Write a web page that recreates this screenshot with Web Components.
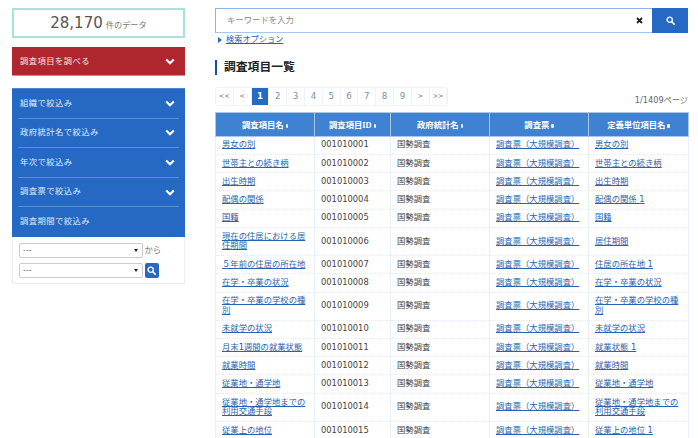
<!DOCTYPE html>
<html lang="ja">
<head>
<meta charset="utf-8">
<title>調査項目一覧</title>
<style>
html,body{margin:0;padding:0;height:438px;overflow:hidden;background:#fff;}
body{font:8.33px/1.13 "DejaVu Sans","Noto Sans CJK JP",sans-serif;color:#444;}
app-page{width:698px;}
</style>
</head>
<body>
<app-page>
    <data-count slot="side" value="28,170" unit="件のデータ"></data-count>
    <red-toggle slot="side">調査項目を調べる</red-toggle>
    <filter-panel slot="side">
        <filter-row>組織で絞込み</filter-row>
        <filter-row>政府統計名で絞込み</filter-row>
        <filter-row>年次で絞込み</filter-row>
        <filter-row>調査票で絞込み</filter-row>
        <filter-row nochevron>調査期間で絞込み</filter-row>
    </filter-panel>
    <period-form slot="side"></period-form>

    <keyword-search></keyword-search>
    <section-title>調査項目一覧</section-title>
    <page-nav current="1" info="1/1409ページ"></page-nav>
    <item-table></item-table>
</app-page>

<script>
const chevron = `<svg width="10" height="7" viewBox="0 0 10 7"><path d="M1.2 1.4 5 5.2 8.8 1.4" fill="none" stroke="#fff" stroke-width="2.1"/></svg>`;
const magnifier = (size) => `<svg width="${size}" height="${size}" viewBox="0 0 12 12"><circle cx="5" cy="5" r="3.5" fill="none" stroke="#fff" stroke-width="1.9"/><path d="M7.7 7.7 11 11" stroke="#fff" stroke-width="2.2" stroke-linecap="round"/></svg>`;

class AppPage extends HTMLElement {
    constructor() {
        super();
        this.attachShadow({ mode: 'open' }).innerHTML = `
        <style>
        :host{ display:grid; grid-template-columns:173px 473px; column-gap:30px; padding:8px 0 0 12px; box-sizing:border-box; }
        aside{ display:flex; flex-direction:column; }
        main{ display:flex; flex-direction:column; min-width:0; }
        </style>
        <aside><slot name="side"></slot></aside>
        <main><slot></slot></main>
        `;
    }
}

class DataCount extends HTMLElement {
    constructor() {
        super();
        this.attachShadow({ mode: 'open' }).innerHTML = `
        <style>
        :host{ display:flex; align-items:baseline; justify-content:center; height:30px; box-sizing:border-box; border:2px solid #a6e4d9; line-height:27px; color:#555; }
        b{ font-weight:400; font-size:15px; margin-right:3px; }
        span{ font-size:8.2px; color:#777; }
        </style>
        <b>${this.getAttribute('value')}</b><span>${this.getAttribute('unit')}</span>
        `;
    }
}

class RedToggle extends HTMLElement {
    constructor() {
        super();
        this.attachShadow({ mode: 'open' }).innerHTML = `
        <style>
        :host{ display:flex; align-items:center; justify-content:space-between; height:29px; margin-top:9px; padding:1px 10px 0 8px; background:#b0262e; color:#f6e3e4; letter-spacing:.42px; border-bottom:1px solid #d98a8e; box-sizing:border-box; }
        svg{ display:block; }
        </style>
        <slot></slot>${chevron}
        `;
    }
}

class FilterPanel extends HTMLElement {
    constructor() {
        super();
        this.attachShadow({ mode: 'open' }).innerHTML = `
        <style>
        :host{ display:block; margin-top:12px; padding:0 6px 0 6px; background:#2669c5; border-top:1px solid #4f86d3; }
        </style>
        <slot></slot>
        `;
    }
}

class FilterRow extends HTMLElement {
    constructor() {
        super();
        const arrow = this.hasAttribute('nochevron') ? '' : chevron;
        this.attachShadow({ mode: 'open' }).innerHTML = `
        <style>
        :host{ display:flex; align-items:center; justify-content:space-between; height:29.6px; padding:0 4px 0 2px; color:#dfe9f8; letter-spacing:.42px; border-bottom:1px solid #5a8fd6; box-sizing:border-box; }
        :host(:last-child){ border-bottom:0; }
        svg{ display:block; }
        </style>
        <slot></slot>${arrow}
        `;
    }
}

class PeriodForm extends HTMLElement {
    constructor() {
        super();
        this.attachShadow({ mode: 'open' }).innerHTML = `
        <style>
        :host{ display:flex; flex-direction:column; gap:5.5px; height:47px; box-sizing:border-box; padding:6px 0 0 6px; border:1px solid #eee; border-top:0; }
        .line{ display:flex; align-items:center; gap:1.5px; }
        .sel{ display:flex; align-items:center; justify-content:space-between; width:124px; height:14.6px; box-sizing:border-box; padding:0 4px 0 3px; border:1px solid #ccc; border-radius:2px; color:#777; font-size:8px; background:#fff; }
        .sel i{ width:0; height:0; border:2px solid transparent; border-top:3.5px solid #222; border-bottom:0; }
        .txt{ color:#777; font-size:8.4px; }
        button{ display:flex; align-items:center; justify-content:center; width:14px; height:14.6px; padding:0; border:0; border-radius:2px; background:#2669c5; }
        </style>
        <div class="line"><div class="sel"><span>---</span><i></i></div><span class="txt">から</span></div>
        <div class="line"><div class="sel"><span>---</span><i></i></div><button>${magnifier(9)}</button></div>
        `;
    }
}

class KeywordSearch extends HTMLElement {
    constructor() {
        super();
        this.attachShadow({ mode: 'open' }).innerHTML = `
        <style>
        :host{ display:block; }
        .box{ display:flex; height:25px; box-sizing:border-box; border:1px solid #8fb3e3; border-bottom-color:#a9c6ea; }
        .ph{ flex:1; display:flex; align-items:center; padding-left:11px; color:#888; font-size:8.4px; }
        .x{ display:flex; align-items:center; width:16px; font-size:0; }
        button{ display:flex; align-items:center; justify-content:center; width:36px; margin:-1px -1px -1px 0; padding:0; border:0; background:#2669c5; }
        .opt{ display:flex; align-items:center; gap:4px; margin-top:2px; padding-left:3px; height:10px; }
        .opt i{ width:0; height:0; border:3px solid transparent; border-left:4px solid #2669c5; border-right:0; }
        a{ color:#2a63ad; text-decoration:underline; font-size:8.2px; }
        </style>
        <div class="box">
            <div class="ph">キーワードを入力</div>
            <div class="x"><svg width="7" height="7" viewBox="0 0 7 7"><path d="M1 1 6 6M6 1 1 6" stroke="#222" stroke-width="1.8"/></svg></div>
            <button>${magnifier(9)}</button>
        </div>
        <div class="opt"><i></i><a href="#">検索オプション</a></div>
        `;
    }
}

class SectionTitle extends HTMLElement {
    constructor() {
        super();
        this.attachShadow({ mode: 'open' }).innerHTML = `
        <style>
        :host{ display:block; margin-top:15px; padding-left:7px; height:15px; line-height:15px; border-left:2px solid #1750a0; font-size:11.8px; font-weight:700; color:#222; }
        </style>
        <slot></slot>
        `;
    }
}

class PageNav extends HTMLElement {
    constructor() {
        super();
        const labels = ['<<','<','1','2','3','4','5','6','7','8','9','>','>>'];
        const current = this.getAttribute('current');
        const cells = labels.map(l => {
            const small = l.includes('<') || l.includes('>');
            const text = l.replace(/</g,'&lt;').replace(/>/g,'&gt;');
            return `<span class="${l===current?'on':''} ${small?'sm':''}">${text}</span>`;
        }).join('');
        this.attachShadow({ mode: 'open' }).innerHTML = `
        <style>
        :host{ display:flex; justify-content:space-between; align-items:flex-start; margin-top:12px; height:24.5px; }
        nav{ display:flex; gap:1px; padding:0 1px 0 0; height:19px; border:1px solid #f0f2f5; border-radius:3px; box-sizing:border-box; background:#f0f2f5; }
        span{ display:flex; align-items:center; justify-content:center; width:16.8px; background:#fff; color:#6f8fb8; font-size:8.6px; }
        span.sm{ font-size:6.4px; color:#667; }
        span.on{ background:#2669c5; color:#fff; font-weight:700; }
        em{ font-style:normal; font-size:8.2px; color:#666; margin-top:9px; }
        </style>
        <nav>${cells}</nav><em>${this.getAttribute('info')}</em>
        `;
    }
}

const SURVEY = '調査票（大規模調査）';
const ROWS = [
    ['男女の別','男女の別'],
    ['世帯主との続き柄','世帯主との続き柄'],
    ['出生時期','出生時期'],
    ['配偶の関係','配偶の関係 1'],
    ['国籍','国籍'],
    ['現在の住居における居住期間','居住期間'],
    ['５年前の住居の所在地','住居の所在地 1'],
    ['在学・卒業の状況','在学・卒業の状況'],
    ['在学・卒業の学校の種別','在学・卒業の学校の種別'],
    ['未就学の状況','未就学の状況'],
    ['月末1週間の就業状態','就業状態 1'],
    ['就業時間','就業時間'],
    ['従業地・通学地','従業地・通学地'],
    ['従業地・通学地までの利用交通手段','従業地・通学地までの利用交通手段'],
    ['従業上の地位','従業上の地位 1'],
];
const HEADS = ['調査項目名','調査項目ID','政府統計名','調査票','定義単位項目名'];

class ItemTable extends HTMLElement {
    constructor() {
        super();
        const head = HEADS.map(h => `<th>${h}<i></i></th>`).join('');
        const body = ROWS.map((r,i) => `<tr>
            <td><a href="#">${r[0]}</a></td>
            <td>${String(1010001+i).padStart(9,'0')}</td>
            <td>国勢調査</td>
            <td><a href="#">${SURVEY}</a></td>
            <td><a href="#">${r[1]}</a></td>
        </tr>`).join('');
        this.attachShadow({ mode: 'open' }).innerHTML = `
        <style>
        :host{ display:block; }
        table{ width:473px; table-layout:fixed; border-collapse:collapse; }
        th,td{ border:1px solid #e8eff9; }
        th{ height:23px; padding:0; background:#3f82d2; color:#fff; font:700 8.33px "Liberation Serif","Noto Sans CJK JP",serif; border-color:#a9c8ec; }
        th i{ display:inline-block; width:2.4px; height:4px; margin-left:2px; border-radius:1px; background:#e6eefa; }
        td{ padding:3.8px 6px; line-height:9.7px; border-top:1px dotted #e4ebf7; border-bottom:1px dotted #e4ebf7; color:#444; }
        a{ color:#2a63ad; text-decoration:underline; }
        </style>
        <table>
            <colgroup><col style="width:99px"><col style="width:76px"><col style="width:99px"><col style="width:99px"><col style="width:100px"></colgroup>
            <thead><tr>${head}</tr></thead>
            <tbody>${body}</tbody>
        </table>
        `;
    }
}

customElements.define('filter-row', FilterRow);
customElements.define('filter-panel', FilterPanel);
customElements.define('data-count', DataCount);
customElements.define('red-toggle', RedToggle);
customElements.define('period-form', PeriodForm);
customElements.define('keyword-search', KeywordSearch);
customElements.define('section-title', SectionTitle);
customElements.define('page-nav', PageNav);
customElements.define('item-table', ItemTable);
customElements.define('app-page', AppPage);
</script>
</body>
</html>
